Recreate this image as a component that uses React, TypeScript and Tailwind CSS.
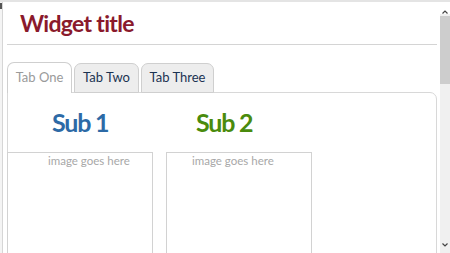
export default function App() {
  return (
    <div className="h-[253px] w-[450px] overflow-hidden bg-white flex flex-col font-['Lato','Open_Sans',sans-serif]">
      {/* frame top edge */}
      <div className="h-[2px] bg-[#e4e4e4] shrink-0" />
      <div className="flex flex-1 min-h-0">
        {/* frame left edge */}
        <div className="w-[3px] shrink-0 border-r border-[#d6d6d6] bg-[#f4f4f4] relative">
          <div className="absolute top-[1px] left-0 w-[2px] h-[6px] bg-[#555]" />
        </div>

        <div className="flex-1 min-w-0 pl-[4px] pr-[3px]">
          {/* header */}
          <div className="border-b border-[#d4d4d4] h-[43px] flex items-center pl-[13px]">
            <h1 className="text-[23px] font-bold text-[#8a1a2c] tracking-[-0.7px] leading-none">
              Widget title
            </h1>
          </div>

          {/* tabs */}
          <div className="mt-[17px] flex items-end gap-[2px] h-[31px] relative z-10">
            <div className="w-[65px] h-[31px] rounded-t-[7px] border border-b-0 border-[#cfcfcf] bg-white flex items-center justify-center text-[13px] text-[#9a9a9a]">
              Tab One
            </div>
            <div className="w-[65px] h-[30px] rounded-t-[7px] border border-[#cfcfcf] bg-[#ededed] flex items-center justify-center text-[13px] text-[#1b3352]">
              Tab Two
            </div>
            <div className="w-[73px] h-[30px] rounded-t-[7px] border border-[#cfcfcf] bg-[#ededed] flex items-center justify-center text-[13px] text-[#1b3352]">
              Tab Three
            </div>
          </div>

          {/* panel */}
          <div className="-mt-[1px] border border-[#d8d8d8] rounded-tr-[7px] h-[200px]">
            <div className="flex items-center h-[59px]">
              <div className="ml-[44px] w-[144px]">
                <h2 className="text-[25px] font-bold text-[#2d6aa6] leading-none tracking-[-1.2px]">Sub 1</h2>
              </div>
              <h2 className="text-[25px] font-bold text-[#4a8b0d] leading-none tracking-[-1.2px]">Sub 2</h2>
            </div>
            <div className="flex gap-[13px] -ml-[1px]">
              <div className="w-[146px] h-[120px] border border-[#d2d2d2] pl-[40px] pt-[1px]">
                <span className="block text-[11.5px] leading-[14px] text-[#a8a8a8]">image goes here</span>
              </div>
              <div className="w-[146px] h-[120px] border border-[#d2d2d2] pl-[25px] pt-[1px]">
                <span className="block text-[11.5px] leading-[14px] text-[#a8a8a8]">image goes here</span>
              </div>
            </div>
          </div>
        </div>

        {/* scrollbar */}
        <div className="w-[10px] shrink-0 bg-[#f0f0f0] flex flex-col items-center">
          <div className="h-[12px] w-full bg-white flex items-end justify-center">
            <svg width="6" height="4" viewBox="0 0 6 4">
              <path d="M0.5 3.5 L3 1 L5.5 3.5" stroke="#444" strokeWidth="1.2" fill="none" />
            </svg>
          </div>
          <div className="mt-[2px] h-[68px] w-full bg-[#cdcdcd]" />
          <div className="flex-1" />
          <div className="h-[10px] w-full flex items-start justify-center">
            <svg width="6" height="4" viewBox="0 0 6 4">
              <path d="M0.5 0.5 L3 3 L5.5 0.5" stroke="#444" strokeWidth="1.2" fill="none" />
            </svg>
          </div>
        </div>
      </div>
    </div>
  );
}
